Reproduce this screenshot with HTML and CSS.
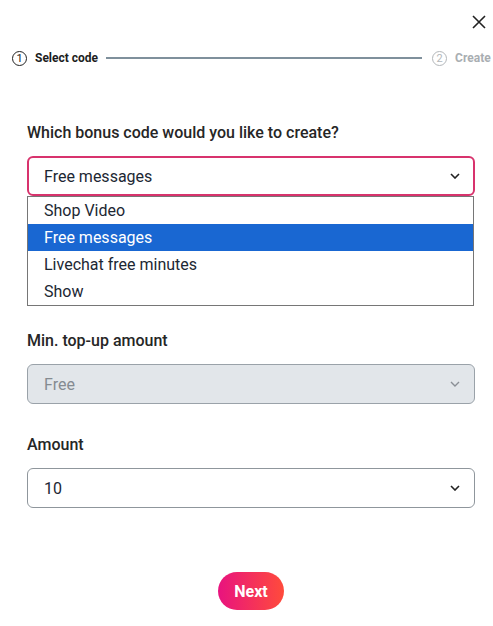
FILE: index.html
```html
<!DOCTYPE html>
<html lang="en">
<head>
<meta charset="utf-8">
<title>Create bonus code</title>
<link rel="stylesheet" href="styles.css">
</head>
<body>
<div class="modal">
  <div class="topbar">
    <button class="close" aria-label="Close">
      <svg width="16" height="16" viewBox="0 0 16 16"><path d="M2 2 L14 14 M14 2 L2 14" stroke="#222" stroke-width="1.6" fill="none"/></svg>
    </button>
  </div>
  <div class="stepper">
    <div class="step active"><span class="num">1</span><span class="label">Select code</span></div>
    <div class="line"></div>
    <div class="step muted"><span class="num">2</span><span class="label">Create</span></div>
  </div>

  <div class="form">
    <div class="field first">
      <div class="field-label">Which bonus code would you like to create?</div>
      <div class="select-wrap">
        <div class="select focused"><span>Free messages</span>
          <svg class="chev" width="10" height="6" viewBox="0 0 10 6"><path d="M1 1 L5 5 L9 1" stroke="#222" stroke-width="1.6" fill="none"/></svg>
        </div>
        <ul class="listbox">
          <li>Shop Video</li>
          <li class="selected">Free messages</li>
          <li>Livechat free minutes</li>
          <li>Show</li>
        </ul>
      </div>
    </div>

    <div class="field">
      <div class="field-label">Min. top-up amount</div>
      <div class="select disabled"><span>Free</span>
        <svg class="chev" width="10" height="6" viewBox="0 0 10 6"><path d="M1 1 L5 5 L9 1" stroke="#8a8f96" stroke-width="1.4" fill="none"/></svg>
      </div>
    </div>

    <div class="field">
      <div class="field-label">Amount</div>
      <div class="select"><span>10</span>
        <svg class="chev" width="10" height="6" viewBox="0 0 10 6"><path d="M1 1 L5 5 L9 1" stroke="#222" stroke-width="1.6" fill="none"/></svg>
      </div>
    </div>
  </div>

  <div class="actions">
    <button class="next">Next</button>
  </div>
</div>
</body>
</html>
```
FILE: styles.css
```css
* { box-sizing: border-box; }
html, body { margin: 0; padding: 0; background: #fff; }
body {
  font-family: Roboto, "Liberation Sans", Arial, sans-serif;
  color: #222;
  width: 493px;
  overflow: hidden;
}
.modal { padding: 0; }
.topbar {
  display: flex;
  justify-content: flex-end;
  padding: 14px 5px 0 0;
  height: 44px;
}
.close {
  border: 0;
  background: none;
  padding: 0;
  width: 16px;
  height: 16px;
  cursor: pointer;
  margin-right: 1px;
}
.close svg { display: block; }
.stepper {
  display: flex;
  align-items: center;
  padding-left: 12px;
  height: 28px;
  white-space: nowrap;
}
.step { display: flex; align-items: center; gap: 8px; font-size: 12px; font-weight: 700; }
.num {
  width: 15px; height: 15px;
  border: 1.3px solid #222;
  border-radius: 50%;
  display: flex; align-items: center; justify-content: center;
  font-size: 11px; font-weight: 400;
  line-height: 1;
}
.step.active .label { color: #1d1d1d; }
.step.muted { color: #a9aeb2; }
.step.muted .num { border-color: #b3b7ba; color: #b3b7ba; }
.line {
  width: 316px;
  height: 2px;
  background: #7f909c;
  margin: 0 10px 0 8px;
}
.form { padding: 0 18px 0 27px; margin-top: 51px; }
.field { margin-bottom: 31px; }
.field.first { margin-bottom: 135px; }
.field-label {
  font-size: 16px;
  font-weight: 500;
  line-height: 20px;
  color: #262626;
  margin-bottom: 13px;
}
.select-wrap { position: relative; }
.select {
  height: 40px;
  border: 1px solid #8f969c;
  border-radius: 6px;
  display: flex;
  align-items: center;
  justify-content: space-between;
  padding: 0 14px 0 16px;
  font-size: 16px;
  color: #1c2733;
  background: #fff;
}
.select.focused { border: 2px solid #d8336d; padding-left: 15px; padding-right: 13px; }
.select.disabled { background: #e2e6ea; border-color: #9aa2a9; color: #858b91; }
.chev { display: block; }
.listbox {
  position: absolute;
  left: 0; right: 1px; top: 40px;
  margin: 0; padding: 0;
  list-style: none;
  border: 1px solid #767676;
  background: #fff;
  z-index: 2;
}
.listbox li {
  height: 27px;
  line-height: 27px;
  padding-left: 16px;
  font-size: 16px;
  color: #1c2733;
}
.listbox li.selected { background: #1967d2; color: #fff; }
.actions { display: flex; justify-content: center; padding: 33px 0 0 9px; }
.next {
  border: 0;
  height: 38px;
  width: 66px;
  border-radius: 19px;
  background: linear-gradient(90deg, #e8137f 0%, #ff4b3b 100%);
  color: #fff;
  font-family: Roboto, "Liberation Sans", Arial, sans-serif;
  font-weight: 700;
  font-size: 16px;
  cursor: pointer;
  padding: 0;
}
```
